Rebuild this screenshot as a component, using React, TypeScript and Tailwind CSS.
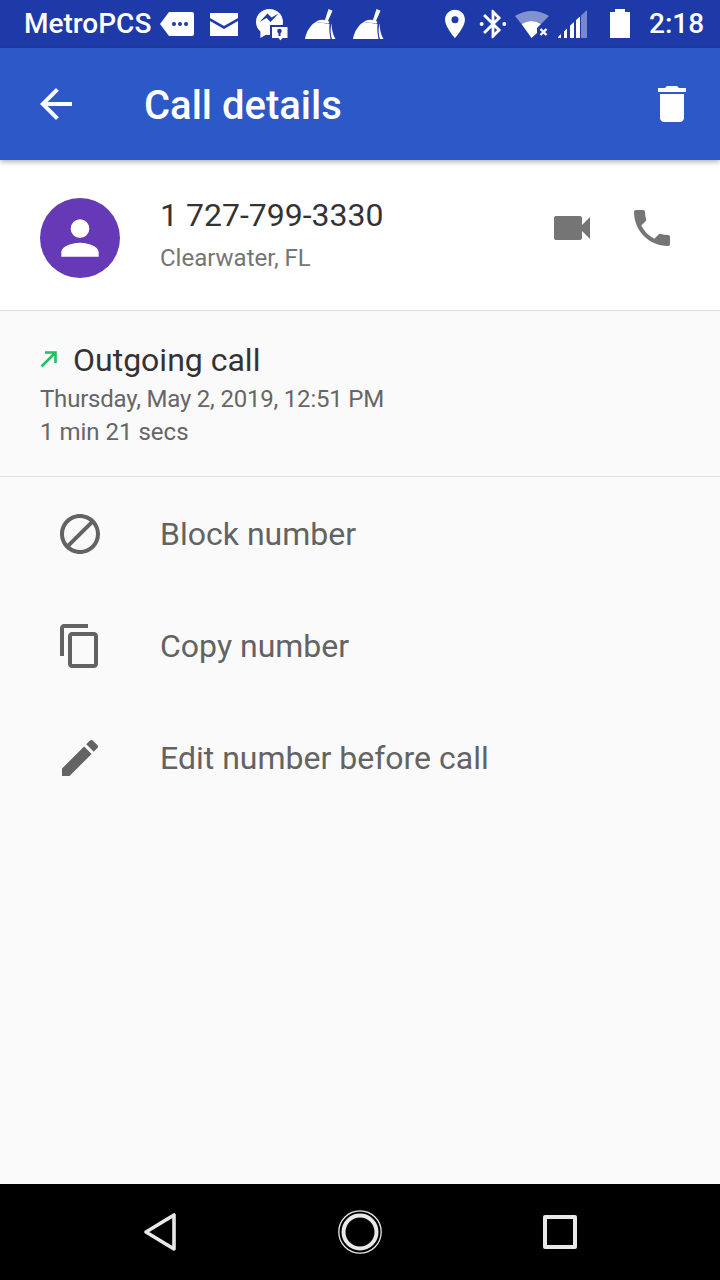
import type { ReactNode } from 'react';

const BAR_BLUE = '#1d3aa8';

function Icon({ size, className, children, vb = '0 0 24 24' }: { size: number; className?: string; children: ReactNode; vb?: string }) {
  return (
    <svg width={size} height={size} viewBox={vb} fill="currentColor" className={`shrink-0 ${className ?? ''}`}>
      {children}
    </svg>
  );
}

function Broom({ className }: { className: string }) {
  return (
    <Icon size={34} vb="0 0 34 34" className={className}>
      <path d="M25.500 2l4 1.800-4.500 10.200 1.500 1-1 1.500-13-1.500q4-3 9.500-2z" />
      <path d="M2 32C3 25 8 17 13 15l13.500 2c-.5 5 0 10 1 15z" />
      <path d="M28.500 16c0 6 1.500 12 4 16h-3.500c-1.500-4-2-10-.5-16z" />
    </Icon>
  );
}

function StatusBar() {
  return (
    <div className="h-12 bg-[#1d3aa8] flex items-center pl-6 text-white shrink-0">
      <span className="w-[128px] text-[28px] font-medium leading-none whitespace-nowrap">MetroPCS</span>
      <Icon size={36} vb="0 0 36 30" className="ml-[7px]">
        <path d="M10 3h23a2 2 0 0 1 2 2v20a2 2 0 0 1-2 2H10L1 15z" />
        <g fill={BAR_BLUE}>
          <circle cx="15" cy="15" r="2" />
          <circle cx="21" cy="15" r="2" />
          <circle cx="27" cy="15" r="2" />
        </g>
      </Icon>
      <Icon size={30} className="ml-[14px]" vb="0 0 30 30">
        <path d="M1 4h28v5L15 17 1 9z" />
        <path d="M1 12l14 8 14-8v15H1z" />
      </Icon>
      <Icon size={36} vb="0 0 36 36" className="ml-[15px]">
        <path d="M15.500 3C8 3 2 8.500 2 16c0 4 1.700 7.200 4.400 9.500V32l5.600-3.300c1.100.3 2.300.4 3.500.4 7.500 0 13.500-5.600 13.500-13.100S23 3 15.500 3z" />
        <path d="M5.500 16l8-8.500 4 4 7-4-8 8.500-4-4z" fill={BAR_BLUE} />
        <path d="M17 20h17.500v13h-5.500l-2.500 3-2.500-3H17z" stroke={BAR_BLUE} strokeWidth="2" />
        <circle cx="25.500" cy="25" r="2.300" fill={BAR_BLUE} />
        <rect x="24.500" y="25" width="2" height="5" fill={BAR_BLUE} />
      </Icon>
      <Broom className="ml-[13px]" />
      <Broom className="ml-[14px]" />
      <Icon size={34} className="ml-[53px]" vb="0 0 24 24">
        <path d="M12 2C8 2 5 5.100 5 9c0 5.200 7 13 7 13s7-7.800 7-13c0-3.900-3-7-7-7zm0 9.500a2.500 2.500 0 1 1 0-5 2.500 2.500 0 0 1 0 5z" />
      </Icon>
      <Icon size={34} className="ml-[4px]" vb="0 0 24 24">
        <path d="M17.700 7.700L12 2h-1v7.600L6.400 5 5 6.400 10.600 12 5 17.600 6.400 19l4.600-4.600V22h1l5.700-5.700-4.300-4.300 4.300-4.300zM13 5.800l1.900 1.900L13 9.600V5.800zm1.900 10.500L13 18.200v-3.800l1.900 1.900z" />
        <circle cx="4" cy="12" r="1.400" />
        <circle cx="20" cy="12" r="1.400" />
      </Icon>
      <Icon size={36} vb="0 0 36 36" className="ml-[4px]">
        <path d="M1 10Q18 0 35 10L27 18Q17.500 12 7.500 18z" opacity="0.45" />
        <path d="M7.500 18Q17.500 12 27 18L23 22v5L17.500 32z" />
        <path d="M26.500 23l6 6M32.500 23l-6 6" stroke="currentColor" strokeWidth="2.400" />
      </Icon>
      <Icon size={32} vb="0 0 32 32" className="ml-[6px]">
        <path d="M25 30V7.500L31 2v28z" opacity="0.4" />
        <path d="M2 30v-1l3-3v4zM8 30v-6.500l3-3V30zM14 30V17.800l4-3.800v16zM20 30V12l4-3.500V30z" />
      </Icon>
      <Icon size={32} vb="0 0 32 32" className="ml-[16px]">
        <path d="M11 1h10v3h5v26H6V4h5z" />
      </Icon>
      <span className="ml-[13px] text-[28px] font-medium leading-none">2:18</span>
    </div>
  );
}

function AppBar() {
  return (
    <div className="h-28 bg-[#2c58c8] flex items-center text-white shrink-0 shadow-[0_2px_5px_rgba(0,0,0,0.3)] relative">
      <Icon size={48} className="ml-8">
        <path d="M20 11H7.830l5.590-5.590L12 4l-8 8 8 8 1.410-1.410L7.830 13H20v-2z" />
      </Icon>
      <h1 className="ml-16 mt-1 text-[40px] font-medium leading-none flex-1">Call details</h1>
      <Icon size={48} className="mr-6">
        <path d="M6 19c0 1.100.9 2 2 2h8c1.100 0 2-.9 2-2V7H6v12zM19 4h-3.500l-1-1h-5l-1 1H5v2h14V4z" />
      </Icon>
    </div>
  );
}

function ActionRow({ icon, label }: { icon: ReactNode; label: string }) {
  return (
    <div className="h-28 flex items-center text-[#636363]">
      <div className="w-40 pl-14 flex">{icon}</div>
      <span className="text-[32px] leading-none">{label}</span>
    </div>
  );
}

export default function App() {
  return (
    <div className="w-[720px] h-[1280px] flex flex-col bg-[#fafafa] overflow-hidden font-['Roboto',sans-serif]">
      <StatusBar />
      <AppBar />

      <div className="h-[151px] shrink-0 bg-white border-b border-[#dcdcdc] flex items-center pl-10 pr-11">
        <div className="w-20 h-20 mt-1.5 rounded-full bg-[#6639b7] text-white flex items-center justify-center shrink-0">
          <Icon size={56}>
            <path d="M12 12a4 4 0 1 0 0-8 4 4 0 0 0 0 8zm0 2c-2.700 0-8 1.300-8 4v2h16v-2c0-2.700-5.300-4-8-4z" />
          </Icon>
        </div>
        <div className="ml-10 mb-[3px] flex-1 flex flex-col">
          <span className="text-[32px] leading-[38px] text-[#333333]">1 727-799-3330</span>
          <span className="mt-2.5 text-[24px] leading-[28px] text-[#757575]">Clearwater, FL</span>
        </div>
        <div className="flex items-center gap-8 mb-3.5 text-[#757575]">
          <Icon size={48}>
            <path d="M17 10.500V7c0-.550-.450-1-1-1H4c-.550 0-1 .450-1 1v10c0 .550.450 1 1 1h12c.550 0 1-.450 1-1v-3.500l4 4v-11l-4 4z" />
          </Icon>
          <Icon size={48}>
            <path d="M6.620 10.790c1.440 2.830 3.760 5.140 6.590 6.590l2.200-2.200c.270-.270.670-.360 1.020-.240 1.120.370 2.330.570 3.570.570.550 0 1 .450 1 1V20c0 .550-.450 1-1 1-9.390 0-17-7.610-17-17 0-.550.450-1 1-1h3.500c.550 0 1 .450 1 1 0 1.250.200 2.450.570 3.570.110.350.030.740-.250 1.020l-2.200 2.200z" />
          </Icon>
        </div>
      </div>

      <div className="h-[166px] shrink-0 border-b border-[#e3e3e3] pl-10 pt-[29px] flex flex-col">
        <div className="flex items-center h-10">
          <svg width="18" height="18" viewBox="0 0 18 18" fill="none" stroke="#1fc160" strokeWidth="2.600" className="shrink-0 -mt-[2px]">
            <path d="M1.500 16.500L15.500 2.500M5 2.500h10.500V13" />
          </svg>
          <span className="ml-[15px] text-[32px] leading-none text-[#333333]">Outgoing call</span>
        </div>
        <span className="mt-[3px] text-[24px] leading-[33px] tracking-[-0.2px] text-[#666666]">Thursday, May 2, 2019, 12:51 PM</span>
        <span className="text-[24px] leading-[33px] text-[#666666]">1 min 21 secs</span>
      </div>

      <div className="pt-px flex-1">
        <ActionRow
          label="Block number"
          icon={
            <Icon size={48}>
              <path d="M12 2C6.480 2 2 6.480 2 12s4.480 10 10 10 10-4.480 10-10S17.520 2 12 2zM4 12c0-4.420 3.580-8 8-8 1.850 0 3.550.630 4.900 1.690L5.690 16.900C4.630 15.550 4 13.850 4 12zm8 8c-1.850 0-3.550-.630-4.900-1.690L18.310 7.100C19.370 8.450 20 10.150 20 12c0 4.420-3.580 8-8 8z" />
            </Icon>
          }
        />
        <ActionRow
          label="Copy number"
          icon={
            <Icon size={48}>
              <path d="M16 1H4c-1.100 0-2 .9-2 2v14h2V3h12V1zm3 4H8c-1.100 0-2 .9-2 2v14c0 1.100.9 2 2 2h11c1.100 0 2-.9 2-2V7c0-1.100-.9-2-2-2zm0 16H8V7h11v14z" />
            </Icon>
          }
        />
        <ActionRow
          label="Edit number before call"
          icon={
            <Icon size={48}>
              <path d="M3 17.250V21h3.750L17.810 9.940l-3.750-3.750L3 17.250zM20.710 7.040c.390-.390.390-1.020 0-1.410l-2.340-2.340c-.390-.390-1.020-.390-1.410 0l-1.830 1.830 3.750 3.750 1.830-1.830z" />
            </Icon>
          }
        />
      </div>

      <div className="h-24 bg-black shrink-0 flex items-center justify-between pl-[141px] pr-[143px] text-[#e8e8e8]">
        <svg width="36" height="40" viewBox="0 0 36 40" fill="none" stroke="currentColor" strokeWidth="3.600" strokeLinejoin="round">
          <path d="M33 3v34L5 20z" />
        </svg>
        <svg width="46" height="46" viewBox="0 0 46 46" fill="none" stroke="currentColor">
          <circle cx="23" cy="23" r="21.200" strokeWidth="1.300" />
          <circle cx="23" cy="23" r="16.500" strokeWidth="4" />
        </svg>
        <div className="w-[34px] h-[34px] rounded-[2px] border-[4px] border-[#e8e8e8]" />
      </div>
    </div>
  );
}
